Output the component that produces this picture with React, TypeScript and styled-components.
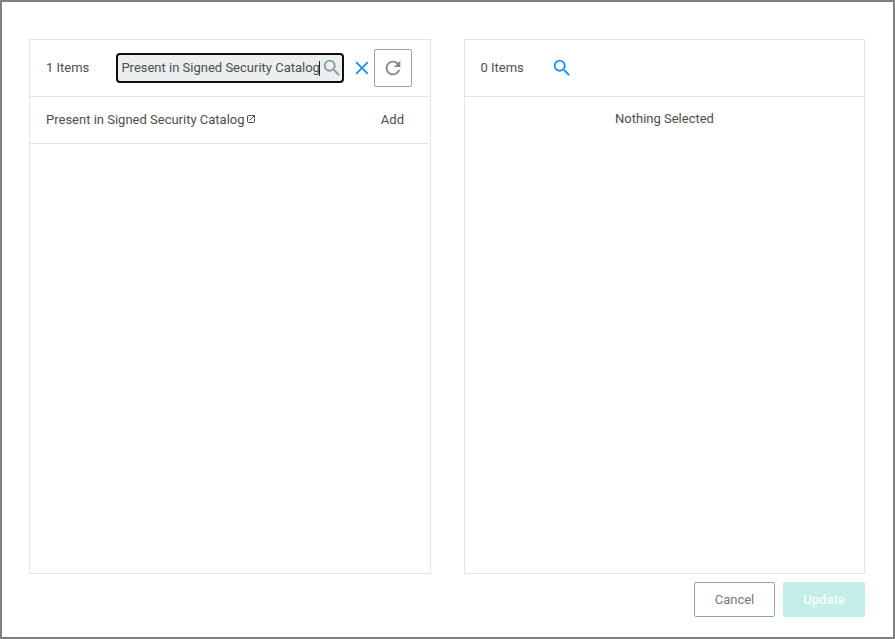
import React from 'react';
import styled, { createGlobalStyle } from 'styled-components';
import { MdSearch, MdRefresh, MdClose } from 'react-icons/md';

const GlobalStyle = createGlobalStyle`
  *, *::before, *::after { box-sizing: border-box; }
  body {
    margin: 0;
    background: #fff;
    font-family: Roboto, "Liberation Sans", sans-serif;
    font-size: 13px;
    line-height: 16px;
    color: #4e4e4e;
  }
`;

const Dialog = styled.main`
  display: flex;
  flex-direction: column;
  width: 895px;
  height: 639px;
  border: 2px solid #808080;
  padding: 37px 28px 20px 27px;
`;

const Panels = styled.div`
  display: grid;
  grid-template-columns: 402px 401px;
  column-gap: 33px;
  height: 535px;
`;

const Panel = styled.section`
  border: 1px solid #e4e6e6;
`;

const PanelHeader = styled.header<{ $inset: number }>`
  display: grid;
  grid-template-columns: ${({ $inset }) => 86 - $inset}px auto auto auto;
  justify-content: start;
  align-items: center;
  height: 57px;
  padding-left: ${({ $inset }) => $inset}px;
  border-bottom: 1px solid #e4e6e6;
`;

const Text = styled.span`
  padding-bottom: 1px;
`;

const SearchField = styled.label`
  display: flex;
  align-items: center;
  width: 228px;
  height: 30px;
  padding-left: 3.4px;
  border: 2px solid #101010;
  border-radius: 4px;
  background: #ebeff0;
  white-space: nowrap;
`;

const Caret = styled.span`
  flex: none;
  width: 1px;
  height: 15px;
  margin: 0 0.7px 0 -1px;
  background: #222;
`;

const FieldIcon = styled(MdSearch)`
  flex: none;
  color: #8b98a3;
`;

const IconButton = styled.button<{ $gap: number }>`
  display: flex;
  margin: 0 0 0 ${({ $gap }) => $gap}px;
  padding: 0;
  border: 0;
  background: none;
  color: #1294f8;
`;

const RefreshButton = styled.button`
  display: flex;
  align-items: center;
  justify-content: center;
  width: 38px;
  height: 38px;
  margin: 0 0 0 1px;
  padding: 0;
  border: 1px solid #98a2aa;
  border-radius: 2px;
  background: #fff;
  color: #868686;
`;

const Row = styled.div`
  display: flex;
  align-items: center;
  height: 47px;
  margin-right: 1px;
  padding: 0 25px 0 16px;
  border-bottom: 1px solid #e4e6e6;
`;

const ItemName = styled.span`
  display: flex;
  align-items: center;
  flex: 1;
  gap: 2px;
`;

const LinkIcon = styled.svg`
  margin-bottom: 1px;
  fill: none;
  stroke: #4a4a4a;
`;

const Empty = styled.p`
  margin: 14px 0 0;
  text-align: center;
`;

const Footer = styled.footer`
  display: flex;
  justify-content: flex-end;
  gap: 8px;
  margin-top: 8px;
`;

const Button = styled.button<{ $primary?: boolean }>`
  width: ${({ $primary }) => ($primary ? 82 : 81)}px;
  height: 35px;
  padding: 0;
  border: ${({ $primary }) => ($primary ? '0' : '1px solid #98a2aa')};
  border-radius: 2px;
  background: ${({ $primary }) => ($primary ? '#c4eee8' : '#fff')};
  color: ${({ $primary }) => ($primary ? '#f8fdfc' : '#787878')};
  font: ${({ $primary }) => ($primary ? 500 : 400)} 13px Roboto, "Liberation Sans", sans-serif;
`;

export default function App() {
  return (
    <>
      <GlobalStyle />
      <Dialog>
        <Panels>
          <Panel>
            <PanelHeader $inset={16}>
              <Text>1 Items</Text>
              <SearchField>
                <Text>Present in Signed Security Catalog</Text>
                <Caret />
                <FieldIcon size={22} />
              </SearchField>
              <IconButton $gap={7} aria-label="Clear search">
                <MdClose size={22} />
              </IconButton>
              <RefreshButton aria-label="Refresh">
                <MdRefresh size={22} />
              </RefreshButton>
            </PanelHeader>
            <Row>
              <ItemName>
                <Text>Present in Signed Security Catalog</Text>
                <LinkIcon width="9" height="9" viewBox="0 0 9 9">
                  <path d="M4.5 .5h-3a1 1 0 0 0-1 1v5a1 1 0 0 0 1 1h5a1 1 0 0 0 1-1V4M4.5 .5h3v3M7.5 .5 2.7 5.3" />
                </LinkIcon>
              </ItemName>
              <Text>Add</Text>
            </Row>
          </Panel>
          <Panel>
            <PanelHeader $inset={15.5}>
              <Text>0 Items</Text>
              <IconButton $gap={0} aria-label="Search selected">
                <MdSearch size={22} />
              </IconButton>
            </PanelHeader>
            <Empty>Nothing Selected</Empty>
          </Panel>
        </Panels>
        <Footer>
          <Button>Cancel</Button>
          <Button $primary>Update</Button>
        </Footer>
      </Dialog>
    </>
  );
}
